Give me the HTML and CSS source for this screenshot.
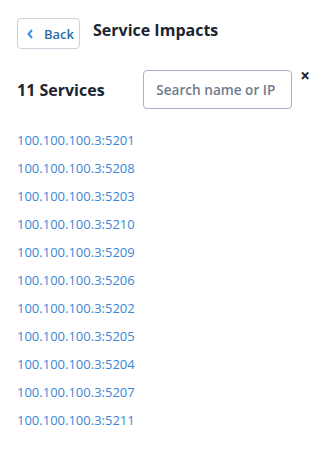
FILE: index.html
```html
<!DOCTYPE html>
<html lang="en">
  <head>
    <meta charset="UTF-8" />
    <title>Service Impacts</title>
    <link rel="stylesheet" href="styles.css">
  </head>
  <body>
    <div class="panel">
      <div class="header">
        <button class="back-btn">
          <svg width="6" height="10" viewBox="0 0 6 10">
            <path d="M5 1 L1.5 5 L5 9" fill="none" stroke="#3a8ee6" stroke-width="2" />
          </svg>
          <span>Back</span>
        </button>
        <h1>Service Impacts</h1>
      </div>

      <div class="toolbar">
        <h2>11 Services</h2>
        <div class="search">
          <input type="text" placeholder="Search name or IP" />
          <span class="clear">&times;</span>
        </div>
      </div>

      <ul class="services">
        <li><a href="#">100.100.100.3:5201</a></li>
        <li><a href="#">100.100.100.3:5208</a></li>
        <li><a href="#">100.100.100.3:5203</a></li>
        <li><a href="#">100.100.100.3:5210</a></li>
        <li><a href="#">100.100.100.3:5209</a></li>
        <li><a href="#">100.100.100.3:5206</a></li>
        <li><a href="#">100.100.100.3:5202</a></li>
        <li><a href="#">100.100.100.3:5205</a></li>
        <li><a href="#">100.100.100.3:5204</a></li>
        <li><a href="#">100.100.100.3:5207</a></li>
        <li><a href="#">100.100.100.3:5211</a></li>
      </ul>
    </div>
  </body>
</html>
```

FILE: styles.css
```css
:root {
  --link-color: #3a87d6;
  --text-color: #1d2430;
  --border-color: #c9d3dd;
}
body {
  font-family: "Open Sans", sans-serif;
  margin: 0;
  padding: 0;
  background: #ffffff;
  color: var(--text-color);
}
.panel {
  padding: 18px 17px;
}
.header {
  display: flex;
  align-items: flex-start;
  gap: 13px;
}
.back-btn {
  display: flex;
  align-items: center;
  gap: 11px;
  height: 31px;
  padding: 0 5px 0 9px;
  border: 1px solid var(--border-color);
  border-radius: 4px;
  background: #ffffff;
  font-family: inherit;
  font-size: 13px;
  font-weight: 600;
  color: #2b6ca3;
  cursor: pointer;
}
.back-btn span {
  margin-top: 1px;
}
h1 {
  margin: 0;
  font-size: 16px;
  font-weight: 700;
  line-height: 24px;
}
.toolbar {
  display: flex;
  align-items: center;
  justify-content: space-between;
  margin-top: 21px;
}
h2 {
  margin: 0;
  font-size: 16px;
  font-weight: 700;
}
.search {
  display: flex;
  align-items: flex-start;
  gap: 8px;
}
.search input {
  width: 149px;
  height: 39px;
  box-sizing: border-box;
  padding: 0 8px 0 12px;
  border: 1px solid #a8b4c4;
  border-radius: 4px;
  font-family: inherit;
  font-size: 13.6px;
  font-weight: 600;
}
.search input::placeholder {
  color: #6f7c8f;
}
.clear {
  font-size: 17px;
  font-weight: 700;
  line-height: 12px;
  margin-top: 0;
  margin-right: -1px;
}
.services {
  list-style: none;
  margin: 17px 0 0;
  padding: 0;
}
.services li {
  line-height: 28px;
  font-size: 13px;
}
.services a {
  color: var(--link-color);
  text-decoration: none;
}
```
